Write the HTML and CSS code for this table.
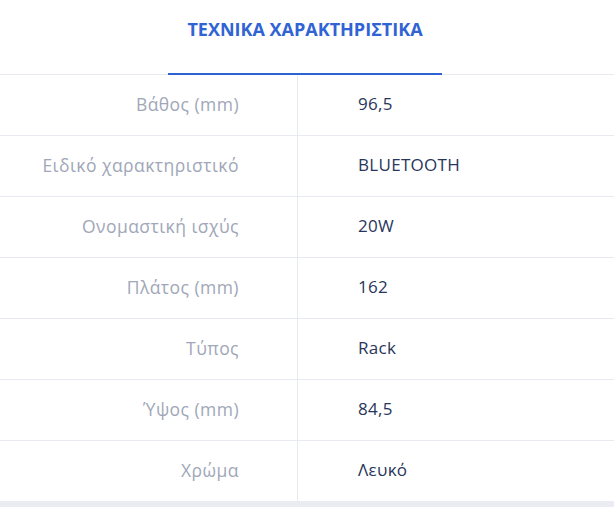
FILE: index.html
```html
<!DOCTYPE html>
<html lang="el">
<head>
<meta charset="utf-8">
<link rel="stylesheet" href="styles.css">
</head>
<body>
<div class="page">
  <div class="tabs">
    <div class="tab active">ΤΕΧΝΙΚΑ ΧΑΡΑΚΤΗΡΙΣΤΙΚΑ</div>
  </div>
  <div class="specs">
    <div class="row"><div class="label">Βάθος (mm)</div><div class="value">96,5</div></div>
    <div class="row"><div class="label">Ειδικό χαρακτηριστικό</div><div class="value">BLUETOOTH</div></div>
    <div class="row"><div class="label">Ονομαστική ισχύς</div><div class="value">20W</div></div>
    <div class="row"><div class="label">Πλάτος (mm)</div><div class="value">162</div></div>
    <div class="row"><div class="label">Τύπος</div><div class="value">Rack</div></div>
    <div class="row"><div class="label">Ύψος (mm)</div><div class="value">84,5</div></div>
    <div class="row last"><div class="label">Χρώμα</div><div class="value">Λευκό</div></div>
  </div>
  <div class="footer-band"></div>
</div>
</body>
</html>
```
FILE: styles.css
```css
html, body {
  margin: 0;
  padding: 0;
  background: #ffffff;
}
body {
  font-family: "Open Sans", "Noto Sans", sans-serif;
}
.page {
  width: 614px;
}
.tabs {
  height: 75px;
  border-bottom: 1px solid #e8eaf2;
  display: flex;
  align-items: flex-start;
  padding-left: 168px;
  box-sizing: border-box;
}
.tab {
  width: 274px;
  height: 75px;
  box-sizing: border-box;
  text-align: center;
  font-size: 18px;
  font-weight: 700;
  color: #3063d4;
  padding-top: 17px;
}
.tab.active {
  border-bottom: 2px solid #2d62d2;
}
.specs {
  display: flex;
  flex-direction: column;
}
.row {
  display: grid;
  grid-template-columns: 298px 1fr;
  height: 61px;
  border-bottom: 1px solid #e8eaf2;
  box-sizing: border-box;
}
.row.last {
  height: 60px;
  border-bottom: none;
}
.label {
  border-right: 1px solid #e8eaf2;
  padding-right: 58px;
  color: #a0a7b8;
  font-size: 17.5px;
  letter-spacing: 0.45px;
  display: flex;
  align-items: center;
  justify-content: flex-end;
  padding-bottom: 3px;
}
.value {
  padding-left: 60px;
  color: #28365a;
  font-size: 17px;
  letter-spacing: 0.3px;
  display: flex;
  align-items: center;
  padding-bottom: 3px;
}
.footer-band {
  height: 6px;
  background: #e9ecf1;
}
```
